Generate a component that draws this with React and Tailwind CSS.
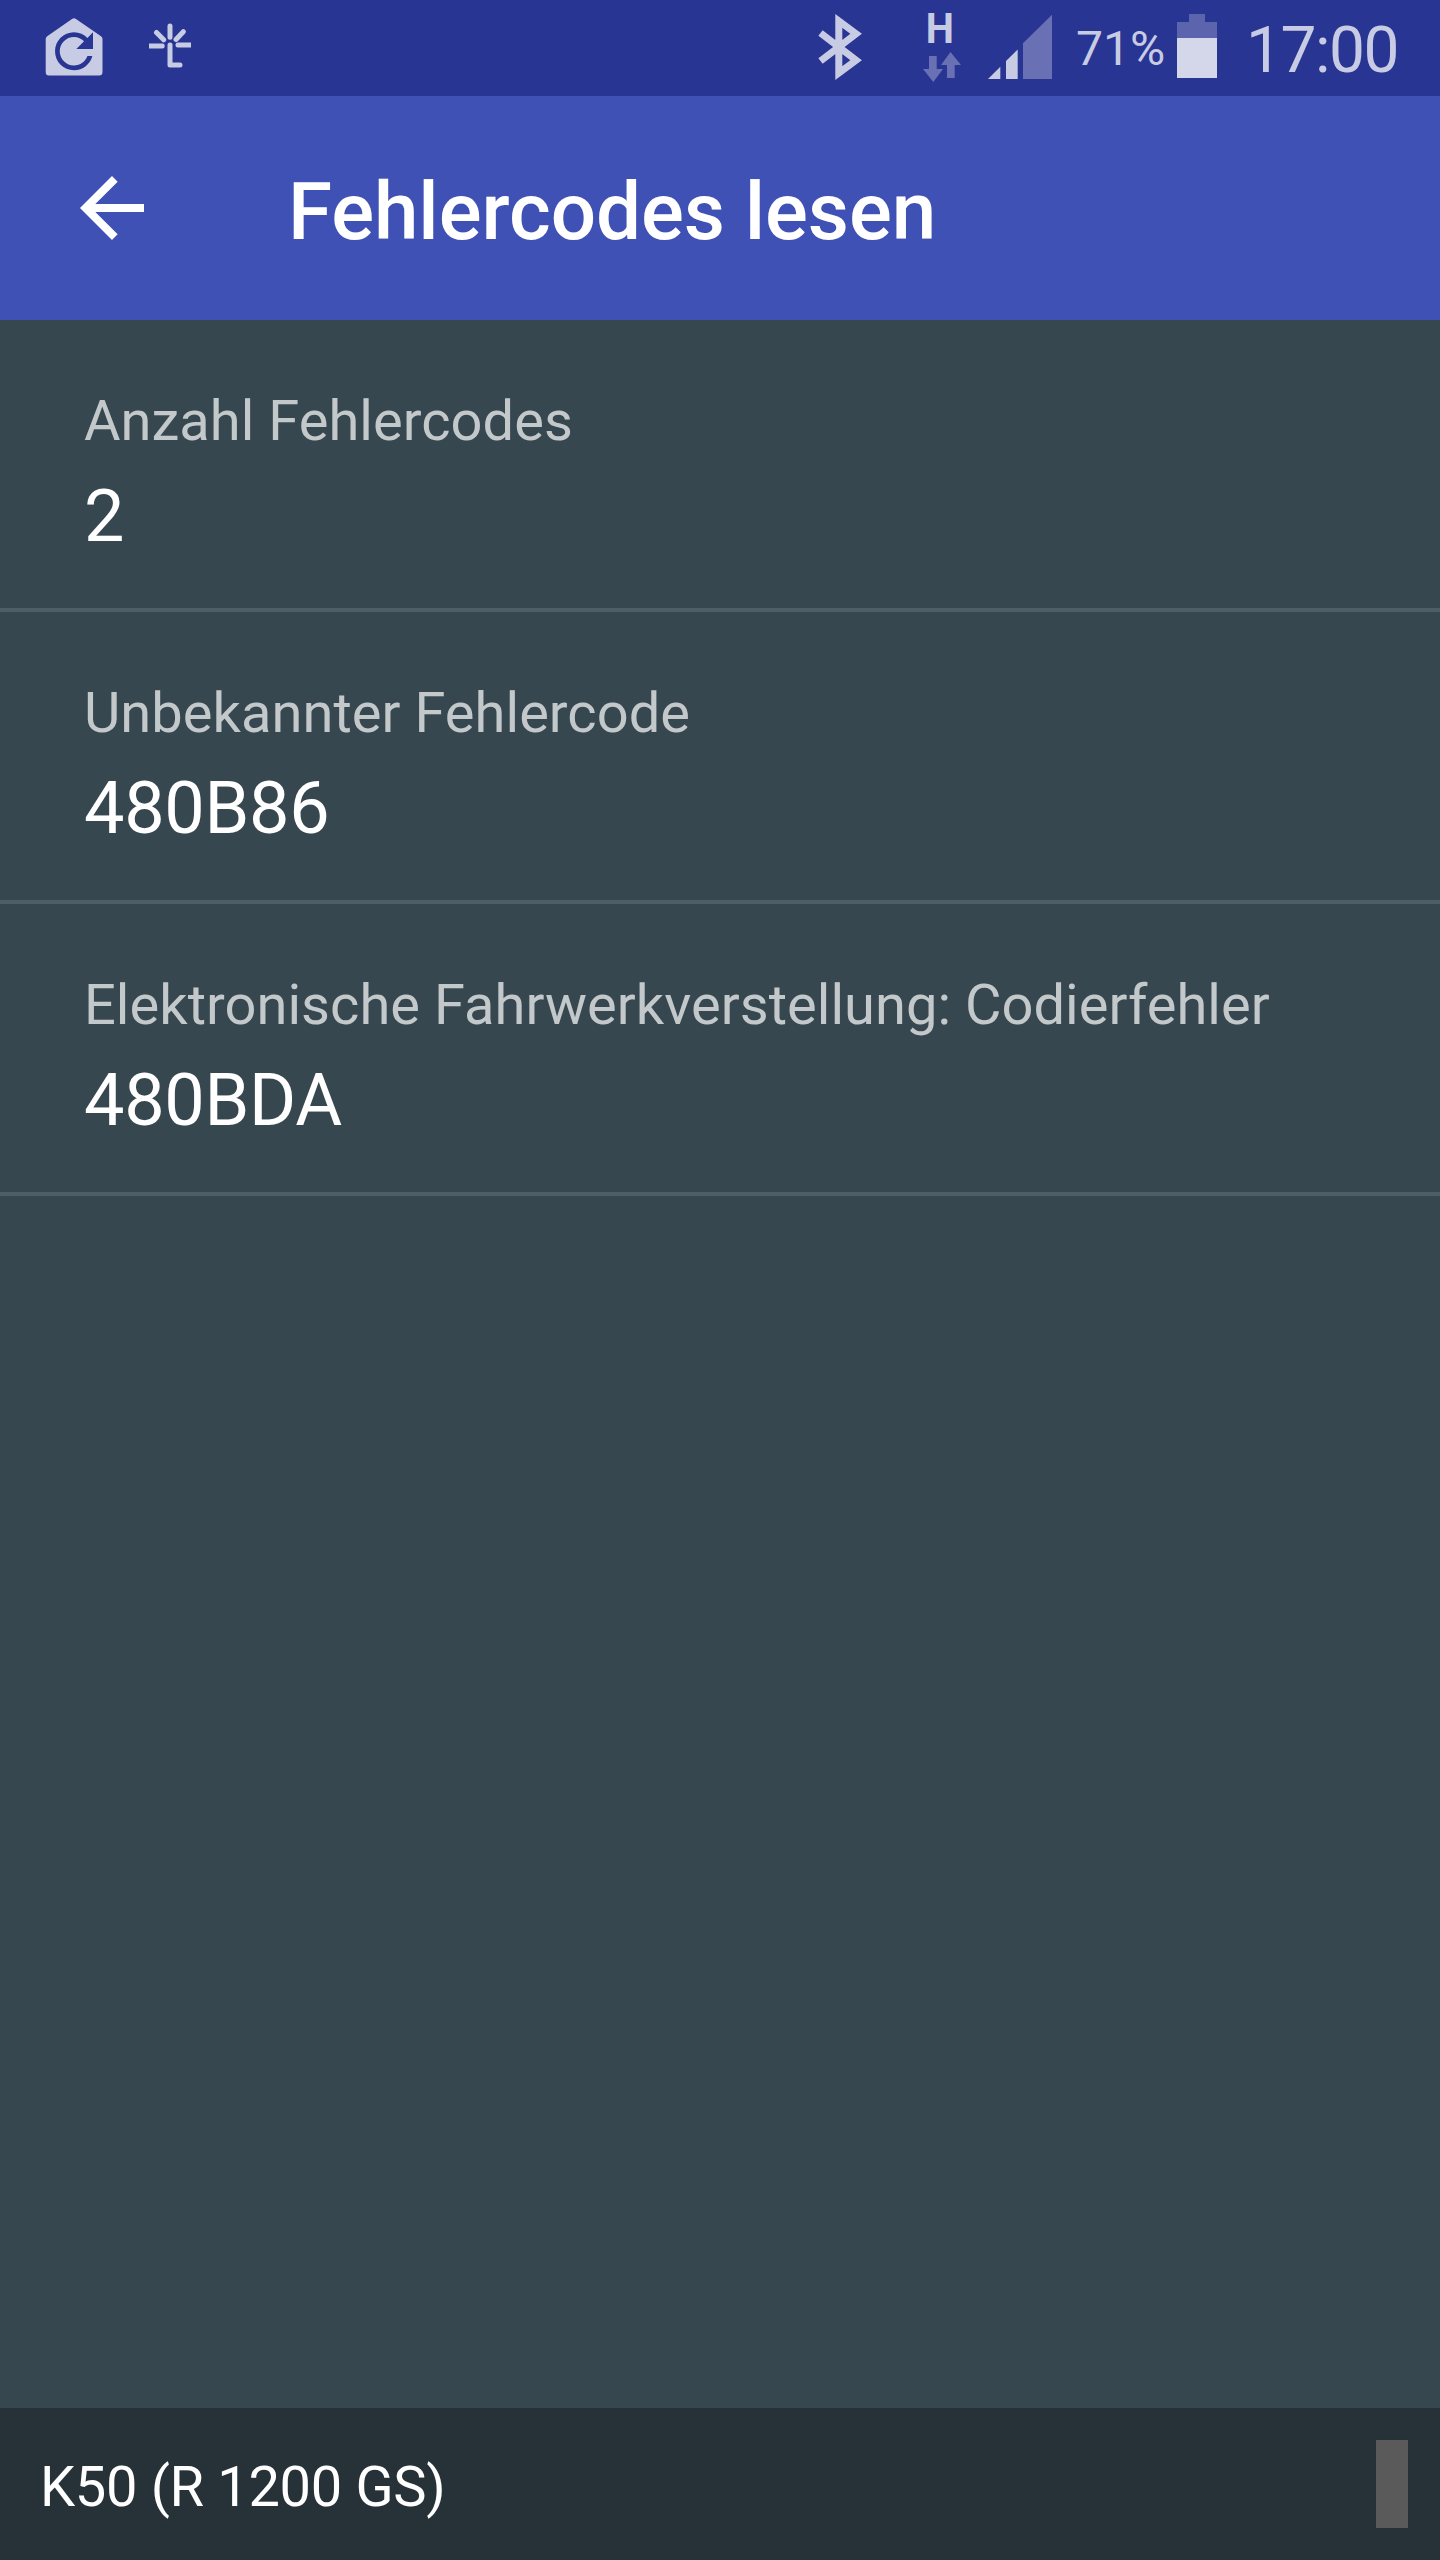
import React from "react";

const codes = [
  { label: "Anzahl Fehlercodes", value: "2" },
  { label: "Unbekannter Fehlercode", value: "480B86" },
  { label: "Elektronische Fahrwerkverstellung: Codierfehler", value: "480BDA" },
];

const HomeSyncIcon = () => (
  <svg className="w-[58px] h-24 ml-[45px]" viewBox="45 0 58 96">
    <path
      d="M72 19Q74 17.6 76 19L101 36.2Q102.5 37.3 102.5 39V72Q102.5 75.5 99 75.5H49Q45.7 75.5 45.7 72V39Q45.7 37.3 47.2 36.2Z"
      fill="#c8cbe4"
    />
    <path
      transform="translate(45.5 22.8) scale(2.375)"
      d="M17.65 6.35C16.2 4.9 14.21 4 12 4c-4.42 0-7.99 3.58-7.99 8s3.57 8 7.99 8c3.73 0 6.84-2.55 7.73-6h-2.08c-.82 2.33-3.04 4-5.65 4-3.31 0-6-2.69-6-6s2.69-6 6-6c1.66 0 3.14.69 4.22 1.78L13 11h7V4z"
      fill="#293593"
    />
  </svg>
);

const SparkIcon = () => (
  <svg
    className="w-[42px] h-24 ml-[46px]"
    viewBox="149 0 42 96"
    fill="none"
    stroke="#c8cbe4"
    strokeWidth="5"
    strokeLinecap="round"
    strokeLinejoin="round"
  >
    <path d="M170 26V37.2M156.5 32.5L163.7 39.8M183.3 31.7L176 39.5M148 46H162.2M178 45H192M170 45V65H180" />
  </svg>
);

const BluetoothIcon = () => (
  <svg
    className="w-[46px] h-24"
    viewBox="817 0 46 96"
    fill="none"
    stroke="#c8cbe4"
    strokeWidth="7"
    strokeMiterlimit="6"
  >
    <path d="M820.5 33L856.1 60.3L838.8 73V21L856.1 33.7L820.5 61" />
  </svg>
);

const DataArrowsIcon = () => (
  <svg className="w-[38px] h-[32px]" viewBox="923 52 38 32" fill="#6971b4">
    <path d="M929 56H936.7V69H943L933.3 82L923 69H929Z" />
    <path d="M947 78H954.7V65H961L950.5 52L941 65H947Z" />
  </svg>
);

const SignalIcon = () => (
  <svg className="w-[64px] h-24 ml-[27px]" viewBox="988 0 64 96">
    <path d="M988 79L1000.3 66.7V79Z" fill="#c8cbe4" />
    <path d="M1006 79V61L1017.7 49.5V79Z" fill="#c8cbe4" />
    <path d="M1023 79V43.3L1052 14.8V79Z" fill="#6971b4" />
  </svg>
);

const StatusBar = () => (
  <div className="flex items-start justify-between h-24 bg-[#293593] text-[#c8cbe4]">
    <div className="flex">
      <HomeSyncIcon />
      <SparkIcon />
    </div>

    <div className="flex">
      <BluetoothIcon />
      <div className="flex flex-col items-center w-[38px] ml-[60px] pt-[13px]">
        <span className="block h-[39px] pr-1 text-[42px] leading-[32px] font-bold scale-x-95">H</span>
        <DataArrowsIcon />
      </div>
      <SignalIcon />
      <span className="w-[101px] ml-6 pt-[21px] text-[48px] leading-[56px] whitespace-nowrap">71%</span>
      <div className="flex flex-col items-center w-[40px] pt-[14px]">
        <div className="w-4 h-2 bg-[#5b64ac]" />
        <div className="w-full h-4 bg-[#5b64ac]" />
        <div className="w-full h-10 bg-[#d4d7ea]" />
      </div>
      <span className="w-[194px] ml-[29px] pt-[13px] text-[64px] leading-[75px] tracking-[-1.5px] whitespace-nowrap">17:00</span>
    </div>
  </div>
);

const AppBar = () => (
  <header className="flex items-center h-56 pl-16 bg-[#3f51b5] text-white">
    <svg className="w-24 h-24" viewBox="0 0 24 24" fill="currentColor">
      <path d="M20 11H7.83l5.59-5.59L12 4l-8 8 8 8 1.41-1.41L7.83 13H20v-2z" />
    </svg>
    <h1 className="ml-32 pt-2 text-[80px] leading-[94px] tracking-[-0.06px] font-medium">Fehlercodes lesen</h1>
  </header>
);

const App = () => {
  return (
    <div className="flex flex-col w-[1440px] h-[2560px] overflow-hidden bg-[#37474f] font-['Roboto',sans-serif]">
      <StatusBar />
      <AppBar />

      <main className="flex-1">
        {codes.map((item) => (
          <div key={item.label} className="h-[292px] px-[84px] pt-[68px] border-b-4 border-[#4f5d64]">
            <p className="text-[56px] leading-[66px] tracking-[0.04px] text-[#c3c8ca]">{item.label}</p>
            <p className="mt-[21px] text-[72px] leading-[84px] tracking-[-0.3px] text-white">{item.value}</p>
          </div>
        ))}
      </main>

      <footer className="flex items-center justify-between h-[152px] pl-10 pr-8 bg-[#263238]">
        <span className="pt-[6px] text-[56px] leading-[66px] tracking-[-0.32px] text-white">K50 (R 1200 GS)</span>
        <div className="w-8 h-[88px] bg-[#5a5a5a]" />
      </footer>
    </div>
  );
};

export default App;
